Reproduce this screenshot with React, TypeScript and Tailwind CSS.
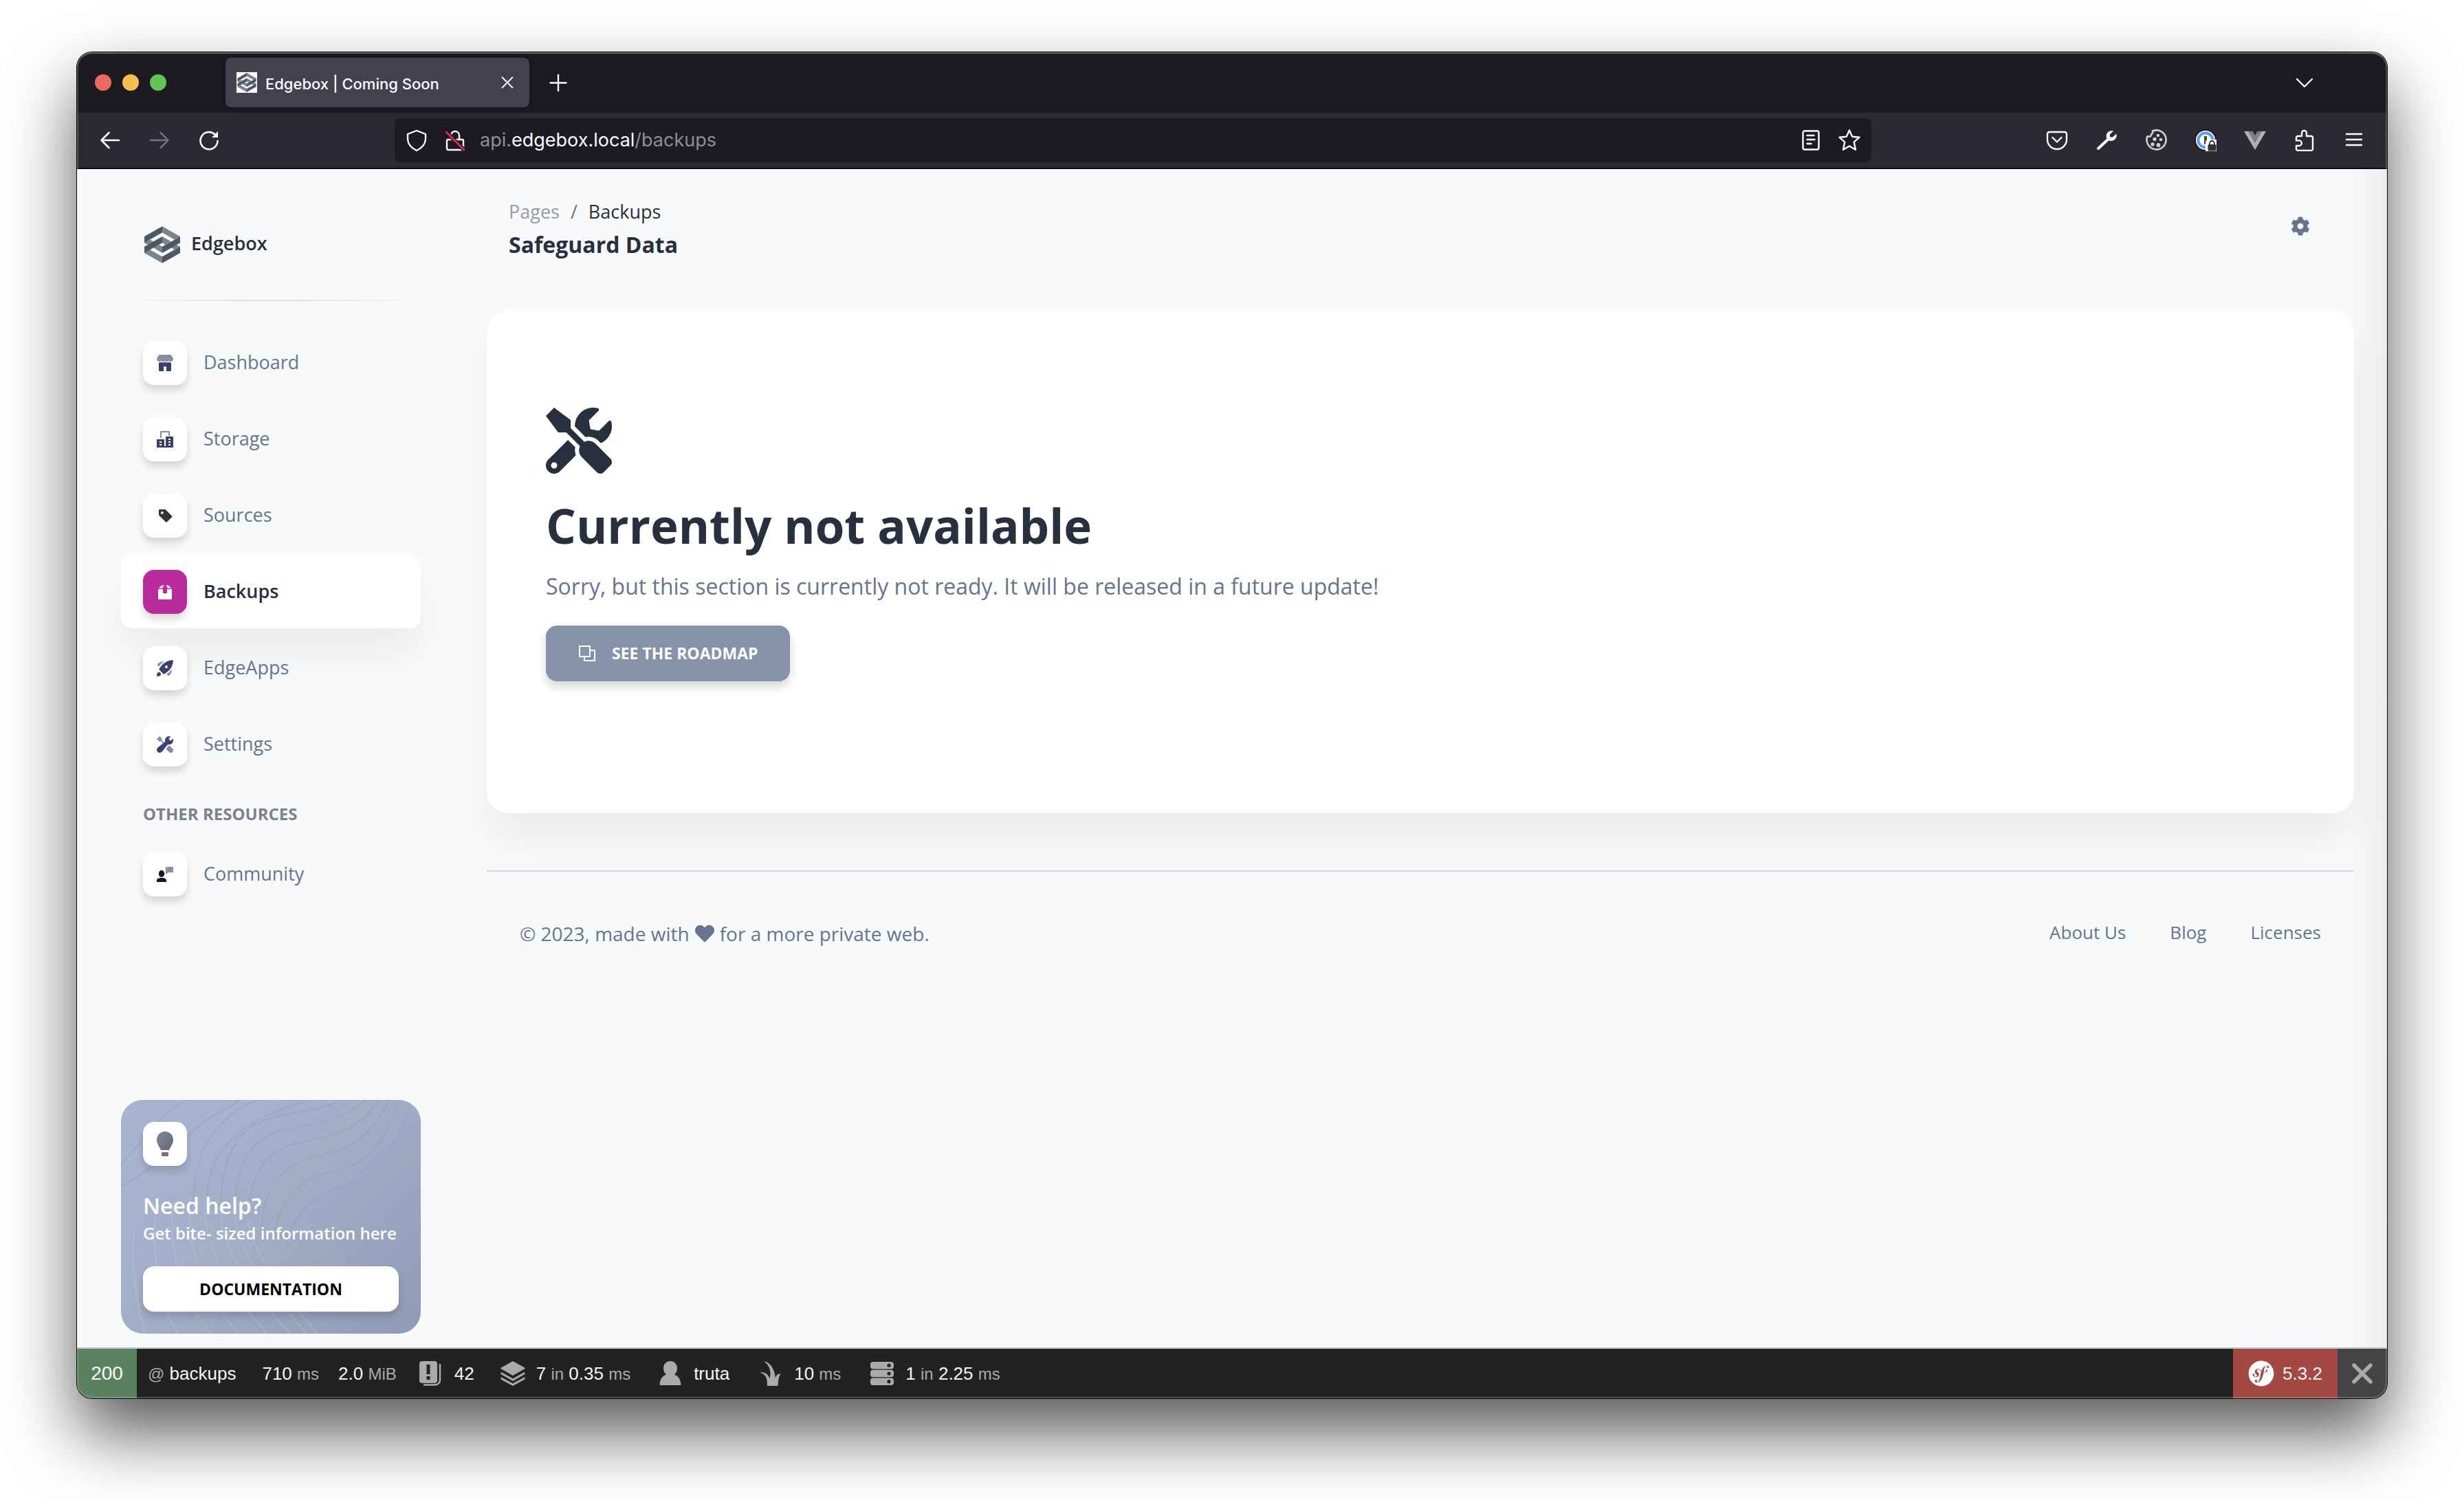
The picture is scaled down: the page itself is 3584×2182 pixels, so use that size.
import type { ReactNode } from "react";
import { FaCog, FaHeart, FaSymfony, FaTools } from "react-icons/fa";

const NAVY = "#3a416f";

/* ---------- brand ---------- */

function EdgeboxMark({ className }: { className: string }) {
  return (
    <svg viewBox="30 22 156 160" className={className} aria-hidden="true">
      <g fill="#7c838b">
        <path d="M108 22 186 66 162 80 108 49Z" />
        <path d="M30 94 54 80 70 88 46 102Z" />
        <path d="M108 66 146 88 122 102 108 94Z" />
        <path d="M70 115 94 102 108 110 108 138Z" />
        <path d="M186 110 162 124 147 115 170 102Z" />
        <path d="M30 138 54 124 108 154 108 182Z" />
      </g>
      <g fill="#4d5962">
        <path d="M30 66 108 22 108 49 30 94Z" />
        <path d="M30 110 108 66 108 94 30 138Z" />
        <path d="M108 110 186 66 186 94 108 138Z" />
        <path d="M108 154 186 110 186 138 108 182Z" />
      </g>
    </svg>
  );
}

/* ---------- browser chrome icons ---------- */

function Line({ d, className, w = 2, children }: { d?: string; className: string; w?: number; children?: ReactNode }) {
  return (
    <svg viewBox="0 0 32 32" className={className} fill="none" stroke="currentColor" strokeWidth={w} strokeLinecap="round" strokeLinejoin="round" aria-hidden="true">
      {d && <path d={d} />}
      {children}
    </svg>
  );
}

function ReloadIcon() {
  return (
    <Line className="size-8" w={2.6} d="M28.5 17A12.5 12.5 0 1 1 24.5 7.5">
      <path d="M29 3v9h-9z" fill="currentColor" stroke="none" />
    </Line>
  );
}

function InsecureLock() {
  return (
    <Line className="size-8" w={2.4}>
      <path d="M10 15V9a6 6 0 0 1 12 0v6M6 15h20a2 2 0 0 1 2 2v11a2 2 0 0 1-2 2H6a2 2 0 0 1-2-2V17a2 2 0 0 1 2-2z" />
      <path d="M3 4 29 30" stroke="#1c1b22" strokeWidth="6" />
      <path d="M3 4 29 30" stroke="#e22850" strokeWidth="2.6" />
    </Line>
  );
}

function CookieIcon() {
  return (
    <Line className="size-8 text-[#cfcfd1]" w={2.6}>
      <path d="M11 2.5c.6 3-.6 4.500-2 5 .3 2.300-2.500 4.200-5.500 2.800A14 14 0 1 0 11 2.500 14 14 0 0 1 16 1.600" />
      <g fill="currentColor" stroke="none">
        <circle cx="19" cy="9" r="2.300" />
        <circle cx="14" cy="14.500" r="2.700" />
        <circle cx="23" cy="15" r="2.300" />
        <circle cx="11" cy="22" r="2.700" />
        <circle cx="19.500" cy="23" r="2.900" />
      </g>
    </Line>
  );
}

function PasswordIcon() {
  return (
    <svg viewBox="0 0 32 32" className="size-8" aria-hidden="true">
      <circle cx="16" cy="16" r="16" fill="#1b1b1d" />
      <circle cx="16" cy="16" r="14" fill="#fff" />
      <circle cx="16" cy="16" r="10.500" fill="#fff" stroke="#5a9cf8" strokeWidth="4" />
      <rect x="14" y="10" width="4" height="12" fill="#444" />
      <path d="M16 20q0-5 5-5h11v17H16z" fill="#fff" />
      <path d="M22 23v-2.500a3.500 3.500 0 0 1 7 0V23" fill="none" stroke="#333" strokeWidth="1.800" />
      <rect x="19.500" y="22" width="12" height="9.500" rx="1.500" fill="#333" />
    </svg>
  );
}

function ToolbarIcons() {
  const items: { label: string; icon: ReactNode }[] = [
    {
      label: "Save to Pocket",
      icon: <Line className="size-8" w={2.400} d="M5 4h22a3 3 0 0 1 3 3v8a14 14 0 0 1-28 0V7a3 3 0 0 1 3-3zM9.500 12l6.500 6.500 6.500-6.500" />,
    },
    {
      label: "Web developer tools",
      icon: (
        <svg viewBox="0 0 32 32" className="size-8" aria-hidden="true">
          <path d="M4 28 20 13" stroke="#fbfbfe" strokeWidth="4" strokeLinecap="round" />
          <path d="M26 2.500 21 7.500v4h4l5.500-5c1 5-2 10.500-7.500 10.500-2 0-4-.5-5.500-2-3-3.500-2-9.500 1.500-11.500 2-1.300 4.800-1.700 7-1z" fill="#fbfbfe" />
        </svg>
      ),
    },
    { label: "Cookies", icon: <CookieIcon /> },
    { label: "Password manager", icon: <PasswordIcon /> },
    {
      label: "Vue devtools",
      icon: (
        <svg viewBox="0 0 32 32" className="size-8" aria-hidden="true">
          <path d="M0 3h6.500L16 19.500 25.500 3H32L16 30z" fill="#b0b0b2" />
          <path d="M6.500 3h6L16 9l3.500-6h6L16 19.500z" fill="#7f7f82" />
        </svg>
      ),
    },
    {
      label: "Extensions",
      icon: (
        <Line
          className="size-8"
          w={2.400}
          d="M12 10V5.500a3.500 3.500 0 0 1 7 0V10h6.500a2.500 2.500 0 0 1 2.500 2.500v16a2.500 2.500 0 0 1-2.500 2.500H6.500A2.500 2.500 0 0 1 4 28.500V24h4a3.800 3.800 0 0 0 0-7.600H4v-4A2.500 2.500 0 0 1 6.500 10z"
        />
      ),
    },
    { label: "Open application menu", icon: <Line className="size-8" w={2.400} d="M5 7h22M5 15h22M5 23h22" /> },
  ];
  return (
    <div className="flex items-center gap-10 text-[#fbfbfe]">
      {items.map((item) => (
        <button key={item.label} type="button" aria-label={item.label}>
          {item.icon}
        </button>
      ))}
    </div>
  );
}

function BrowserChrome() {
  return (
    <header className="font-[Inter,sans-serif] text-[#fbfbfe]">
      <div className="flex h-[88px] items-center bg-[#1c1b22] pr-[104px] pl-[26px]">
        <div className="flex gap-4">
          <button type="button" aria-label="Close window" className="size-6 rounded-full bg-[#ec6a5e]" />
          <button type="button" aria-label="Minimise window" className="size-6 rounded-full bg-[#f4bf4f]" />
          <button type="button" aria-label="Zoom window" className="size-6 rounded-full bg-[#61c554]" />
        </div>
        <div className="ml-[86px] flex h-[72px] w-[442px] items-center rounded-lg bg-[#42414d] px-4 shadow-[0_0_8px_rgba(0,0,0,0.5)]">
          <span className="flex size-[30px] items-center justify-center bg-white">
            <EdgeboxMark className="size-7" />
          </span>
          <span className="ml-3 flex-1 pt-1 text-[22px] font-medium">Edgebox | Coming Soon</span>
          <button type="button" aria-label="Close tab">
            <Line className="size-8" w={1.800} d="M8.500 8.500l15 15M23.500 8.500l-15 15" />
          </button>
        </div>
        <button type="button" aria-label="New tab" className="ml-[26px]">
          <Line className="size-8" w={2.400} d="M16 5v23M4.500 16.500h23" />
        </button>
        <button type="button" aria-label="List all tabs" className="ml-auto">
          <Line className="size-8" w={2.400} d="M5 11l11 11 11-11" />
        </button>
      </div>
      <div className="flex h-[82px] items-center border-b-2 border-[#0c0c0d] bg-[#2b2a33] pr-8 pl-8">
        <div className="flex gap-10">
          <button type="button" aria-label="Go back">
            <Line className="size-8" w={2.600} d="M29 16H4M14.500 5 3.500 16l11 11" />
          </button>
          <button type="button" aria-label="Go forward" disabled className="text-[#77767d]">
            <Line className="size-8" w={2.400} d="M3 16h25M17.500 5l11 11-11 11" />
          </button>
          <button type="button" aria-label="Reload page">
            <ReloadIcon />
          </button>
        </div>
        <div className="ml-[254px] flex h-16 w-[2148px] items-center rounded-lg bg-[#1c1b22] px-4">
          <button type="button" aria-label="Tracking protection">
            <Line className="size-8" w={2.400} d="M16 2 29 7v7c0 7-5 13-13 17C8 27 3 21 3 14V7z" />
          </button>
          <button type="button" aria-label="Connection is not secure" className="ml-6">
            <InsecureLock />
          </button>
          <div
            role="textbox"
            aria-label="Address"
            contentEditable
            suppressContentEditableWarning
            className="ml-5 flex-1 text-[27px] text-[#8f8e96] outline-none"
          >
            api.<span className="text-[#fbfbfe]">edgebox.local</span>/backups
          </div>
          <button type="button" aria-label="Reader view">
            <Line className="size-8" w={2.400} d="M7 2.500h18a2.500 2.500 0 0 1 2.500 2.500v22a2.500 2.500 0 0 1-2.500 2.500H7A2.500 2.500 0 0 1 4.500 27V5A2.500 2.500 0 0 1 7 2.500zM10.500 9h10M10.500 15h11M10.500 21h6" />
          </button>
          <button type="button" aria-label="Bookmark this page" className="ml-6">
            <Line className="size-8" w={2.400} d="M16 1.500l4.200 9.300 10.200 1-7.700 6.800 2.300 11.200-9-5.300-9 5.300 2.300-11.200-7.700-6.800 10.200-1z" />
          </button>
        </div>
        <div className="ml-auto">
          <ToolbarIcons />
        </div>
      </div>
    </header>
  );
}

/* ---------- sidebar icons ---------- */

function ShopIcon() {
  return (
    <svg viewBox="0 0 47 47" className="size-6" fill={NAVY} aria-hidden="true">
      <path
        opacity="0.6"
        d="M46.72 10.741 40.845.95A1.958 1.958 0 0 0 39.167 0H7.833A1.958 1.958 0 0 0 6.155.95L.28 10.741A1.958 1.958 0 0 0 0 11.750c-.008 4.316 3.484 7.822 7.800 7.833h.016a7.786 7.786 0 0 0 5.236-2.007 7.785 7.785 0 0 0 10.442 0 7.785 7.785 0 0 0 10.452 0 7.832 7.832 0 0 0 13.054-5.826c0-.355-.097-.704-.280-1.009z"
      />
      <path d="M39.198 22.491a10.680 10.680 0 0 1-5.246-1.396l-.030.016a10.640 10.640 0 0 1-10.426-.009l-.021.011a10.640 10.640 0 0 1-10.423-.011 10.640 10.640 0 0 1-7.177 1.189v22.431c0 1.228.877 2.223 1.958 2.223h11.750V33.607h7.834v13.338h11.750c1.081 0 1.958-.995 1.958-2.223V22.282c-.636.130-1.281.200-1.927.209z" />
    </svg>
  );
}

function OfficeIcon() {
  return (
    <svg viewBox="0 0 42 42" className="size-6" fill={NAVY} aria-hidden="true">
      <path opacity="0.6" d="M12.250 17.500h-3.500V1.750C8.750.782 9.532 0 10.500 0h21c.968 0 1.750.782 1.750 1.750v10.500h-3.500V3.500h-17.500z" />
      <path
        fillRule="evenodd"
        d="M40.250 14H24.500c-.968 0-1.750.782-1.750 1.750V38.500h-3.500V22.750c0-.968-.782-1.750-1.750-1.750H1.750C.782 21 0 21.782 0 22.750v17.500C0 41.218.782 42 1.750 42h38.500c.968 0 1.750-.782 1.750-1.750v-24.500c0-.968-.782-1.750-1.750-1.750zM12.250 36.750H7v-3.500h5.250zm0-7H7v-3.500h5.250zm22.750 7h-5.250v-3.500H35zm0-7h-5.250v-3.500H35zm0-7h-5.250v-3.500H35z"
      />
    </svg>
  );
}

function TagIcon() {
  return (
    <svg viewBox="0 0 24 24" className="size-6" fill="#343434" aria-hidden="true">
      <path fillRule="evenodd" d="M4.200 3h8.300l9.700 9.700c.4.400.4.900 0 1.300l-7.600 7.600c-.4.400-.9.400-1.300 0L3.500 12c-.3-.3-.5-.7-.5-1V4.200C3 3.500 3.500 3 4.200 3zM7.800 6a1.900 1.900 0 1 0 0 3.800 1.900 1.900 0 0 0 0-3.800z" />
    </svg>
  );
}

function BoxIcon() {
  return (
    <svg viewBox="0 0 24 24" className="size-6" fill="#fff" aria-hidden="true">
      <path d="M2 8h7v6h6V8h7v14.200c0 .4-.4.800-.8.800H2.800a.8.8 0 0 1-.8-.8z" />
      <path d="M3 7c2-3.500 4.300-4.800 7.700-5L8.500 6.500zM21 7c-2-3.500-3.800-4.800-7.200-5l1.700 4.500z" opacity="0.9" />
    </svg>
  );
}

function RocketIcon() {
  return (
    <svg viewBox="0 0 40 40" className="size-6" fill={NAVY} aria-hidden="true">
      <path
        fillRule="evenodd"
        d="M39.300.707a1.660 1.660 0 0 0-1.268-.490C14.652 1.437 6.015 22.263 5.932 22.473a1.666 1.666 0 0 0 .366 1.800l9.429 9.430c.474.473 1.187.616 1.808.362.208-.085 20.923-8.818 22.247-32.088a1.660 1.660 0 0 0-.482-1.270zM25.690 19.023a3.333 3.333 0 1 1 0-4.713 3.333 3.333 0 0 1 0 4.713z"
      />
      <path d="M1.855 31.407a4.740 4.740 0 0 1 6.703 6.703C6.707 39.962 0 40 0 40s0-6.743 1.855-8.593z" />
      <path opacity="0.6" d="M17.262 3.902a14.930 14.930 0 0 0-13.059 4.140 14.900 14.900 0 0 0-2.306 3c-.386.655-.280 1.488.258 2.025l3.315 3.316a43.700 43.700 0 0 1 11.792-12.481zM36.098 22.738a14.930 14.930 0 0 1-4.140 13.059 14.900 14.900 0 0 1-3 2.306c-.655.386-1.488.280-2.025-.258l-3.316-3.315a43.700 43.700 0 0 0 12.481-11.792z" />
    </svg>
  );
}

function SettingsIcon() {
  return (
    <svg viewBox="0 0 40 40" className="size-6" fill={NAVY} aria-hidden="true">
      <g opacity="0.6">
        <path d="M18.088 15.732 11.178 8.822 13.333 6.667 6.667 0 0 6.667 6.667 13.333 8.822 11.178 15.315 17.672z" />
        <path d="M31.567 23.233a13.400 13.400 0 0 1-3.087.012l-6.068 7.498 7.530 7.530a5.893 5.893 0 0 0 8.333-8.333z" />
      </g>
      <path d="M33.785 11.285l-5.070-5.070L34.062.868A9.930 9.930 0 0 0 30 0c-5.523 0-10 4.477-10 10 0 .990.148 1.943.417 2.847L2.435 27.397A7.220 7.220 0 0 0 2.110 37.890 7.160 7.160 0 0 0 7.202 40c2.065 0 4.035-.887 5.401-2.435l14.550-17.982c.904.269 1.857.417 2.847.417 5.523 0 10-4.477 10-10 0-1.448-.315-2.820-.868-4.063z" />
    </svg>
  );
}

function CommunityIcon() {
  return (
    <svg viewBox="0 0 24 24" className="size-6" aria-hidden="true">
      <path d="M13 1h11v8h-7l-4 3z" fill="#8b8dab" />
      <ellipse cx="7" cy="11" rx="4.200" ry="5" fill="#141727" />
      <path d="M0 23v-2.500C0 18 3 17 7 17s7 1 7 3.500V23z" fill="#141727" />
    </svg>
  );
}

function NavItem({ label, icon, active }: { label: string; icon: ReactNode; active?: boolean }) {
  return (
    <li>
      <a
        href="#"
        aria-current={active ? "page" : undefined}
        className={
          active
            ? "flex h-[107px] items-center gap-6 rounded-2xl bg-white px-8 text-[27px] font-semibold text-[#282f3f] shadow-[0_40px_54px_rgba(0,0,0,0.05)]"
            : "relative flex h-[107px] items-center gap-6 px-8 text-[27px] text-[#67748e]"
        }
      >
        <span
          className={
            active
              ? "flex size-16 items-center justify-center rounded-2xl bg-[#b92a9b] shadow-[0_8px_12px_rgba(0,0,0,0.14)]"
              : "flex size-16 items-center justify-center rounded-2xl bg-white shadow-[0_8px_12px_rgba(0,0,0,0.14)]"
          }
        >
          {icon}
        </span>
        {label}
      </a>
    </li>
  );
}

function HelpCard() {
  return (
    <section className="relative overflow-hidden rounded-[32px] bg-linear-135 from-[#acb8d3] via-[#a2adc6] to-[#8f9bb4] p-8 text-white">
      <svg viewBox="0 0 436 340" preserveAspectRatio="none" className="absolute inset-0 size-full" fill="none" aria-hidden="true">
        <path d="M0 0H170C140 25 110 35 90 60S40 100 0 127Z" fill="#a9b2d2" opacity="0.6" />
        <g stroke="#8f9bb8" strokeWidth="2" opacity="0.38">
          <path d="M0 127C60 90 80 70 105 45S150 18 172 0" strokeWidth="3" />
          <path d="M0 95C40 50 45 30 95 0" />
          <path d="M105 150C105 100 120 30 200 0" />
          <path d="M125 150C125 90 150 35 275 0" />
          <path d="M145 160C145 100 160 40 220 26S290 15 320 0" />
          <path d="M165 165C165 110 180 55 240 43S330 25 355 0" />
          <path d="M185 175C185 120 205 72 260 62S350 40 375 0" />
          <path d="M205 185C205 140 230 92 285 82S365 50 390 0" />
          <path d="M225 195C225 160 255 112 305 105S385 60 405 0" />
          <path d="M240 210C245 175 280 138 325 125S400 70 420 10" />
        </g>
        <g stroke="#c1cade" strokeWidth="2" opacity="0.32">
          <path d="M20 190C12 240 25 300 34 340" />
          <path d="M50 170C45 230 55 290 82 340" />
          <path d="M75 150C70 220 85 285 130 340" />
          <path d="M100 140C95 210 115 280 172 340" />
          <path d="M122 150C120 200 145 270 213 340" />
          <path d="M145 150C142 200 170 260 246 340" />
          <path d="M165 160C165 200 190 250 270 340" />
          <path d="M185 170C185 200 205 245 285 340" />
        </g>
      </svg>
      <div className="relative">
        <span className="flex size-16 items-center justify-center rounded-2xl bg-white shadow-[0_8px_12px_rgba(0,0,0,0.14)]">
          <svg viewBox="0 0 24 36" className="h-9 w-6" aria-hidden="true">
            <defs>
              <linearGradient id="bulb" x1="0" y1="0" x2="1" y2="1">
                <stop offset="0" stopColor="#7f85a0" />
                <stop offset="1" stopColor="#6b6878" />
              </linearGradient>
            </defs>
            <path d="M12 0c7 0 12 5 12 12 0 6-4 10-6 15H6C4 22 0 18 0 12 0 5 5 0 12 0z" fill="url(#bulb)" />
            <rect x="7" y="30" width="10" height="6" rx="1.500" fill="#6f7288" />
          </svg>
        </span>
        <h6 className="mt-9 text-[32px] leading-[44px] font-semibold">Need help?</h6>
        <p className="text-[24px] leading-9 font-semibold whitespace-nowrap">Get bite- sized information here</p>
        <button
          type="button"
          className="mt-[30px] h-[66px] w-full rounded-2xl bg-white text-[23px] font-bold text-black shadow-[0_8px_12px_rgba(0,0,0,0.14)]"
        >
          DOCUMENTATION
        </button>
      </div>
    </section>
  );
}

function Sidebar() {
  return (
    <aside className="flex w-[532px] shrink-0 flex-col overflow-hidden pr-8 pb-5 pl-16">
      <a href="#" className="mt-20 flex items-center gap-4 px-[34px] text-[27px] leading-[56px] font-semibold text-[#282f3f]">
        <EdgeboxMark className="h-[54px] w-[52px]" />
        <span className="pb-1">Edgebox</span>
      </a>
      <hr className="-mx-4 mt-[50px] h-[2px] border-0 bg-linear-to-r from-transparent via-[#dcdddf] to-transparent" />
      <nav aria-label="Main" className="mt-9">
        <ul className="flex flex-col gap-1">
          <NavItem label="Dashboard" icon={<ShopIcon />} />
          <NavItem label="Storage" icon={<OfficeIcon />} />
          <NavItem label="Sources" icon={<TagIcon />} />
          <NavItem label="Backups" icon={<BoxIcon />} active />
          <NavItem label="EdgeApps" icon={<RocketIcon />} />
          <NavItem label="Settings" icon={<SettingsIcon />} />
        </ul>
        <h6 className="mt-8 px-8 text-[24px] leading-8 font-bold text-[#7c818c]">OTHER RESOURCES</h6>
        <ul className="mt-[18px]">
          <NavItem label="Community" icon={<CommunityIcon />} />
        </ul>
      </nav>
      <div className="mt-auto">
        <HelpCard />
      </div>
    </aside>
  );
}

/* ---------- page ---------- */

function Content() {
  return (
    <main className="mr-12 ml-16 flex-1 text-[28px] text-[#67748e]">
      <div className="flex items-start justify-between pr-16 pl-8">
        <div className="mt-10">
          <nav aria-label="Breadcrumb">
            <ol className="flex gap-4 text-[27px] leading-[44px]">
              <li>
                <a href="#" className="text-[#959ba6]">
                  Pages
                </a>
              </li>
              <li aria-hidden="true">/</li>
              <li aria-current="page" className="text-[#282f3f]">
                Backups
              </li>
            </ol>
          </nav>
          <h1 className="text-[32px] leading-[52px] font-bold text-[#282f3f]">Safeguard Data</h1>
        </div>
        <button type="button" aria-label="Settings" className="mt-[69px]">
          <FaCog className="size-7" />
        </button>
      </div>

      <section className="mt-[70px] flex flex-col items-start rounded-[32px] bg-white px-[86px] pt-[141px] pb-48 shadow-[0_40px_54px_rgba(0,0,0,0.05)]">
        <FaTools className="size-24 text-[#282f3f]" />
        <h2 className="mt-7 text-[69px] leading-[94px] font-bold text-[#282f3f]">Currently not available</h2>
        <p className="mt-[18px] text-[32px] leading-[48px]">
          Sorry, but this section is currently not ready. It will be released in a future update!
        </p>
        <a
          href="#"
          className="mt-[33px] flex h-[81px] items-center gap-6 rounded-2xl bg-[#8692aa] pr-[46px] pl-12 text-[23px] font-bold text-white shadow-[0_8px_14px_rgba(0,0,0,0.16)]"
        >
          <svg viewBox="0 0 24 24" className="size-6" fill="none" stroke="currentColor" strokeWidth="2" aria-hidden="true">
            <path d="M1 1h15v15H1zM16 7h7v15H8v-6" />
          </svg>
          SEE THE ROADMAP
        </a>
      </section>

      <footer className="mt-[83px] flex items-start justify-between border-t-2 border-[#d5d7df] px-12 pt-[66px] leading-[48px]">
        <p className="flex items-center gap-2">
          © 2023, made with
          <FaHeart className="size-7" aria-label="love" />
          for a more private web.
        </p>
        <ul className="flex gap-16 text-[26px] leading-[44px]">
          <li>
            <a href="#">About Us</a>
          </li>
          <li>
            <a href="#">Blog</a>
          </li>
          <li>
            <a href="#">Licenses</a>
          </li>
        </ul>
      </footer>
    </main>
  );
}

/* ---------- profiler bar ---------- */

function Dim({ children }: { children: ReactNode }) {
  return <span className="text-[24px] text-[#aaa]">{children}</span>;
}

function ProfilerBar() {
  return (
    <div className="flex h-[74px] items-stretch border-t-2 border-[#c4c5c6] bg-[#222] font-['Liberation_Sans',Arial,sans-serif] text-[26px] whitespace-pre text-[#f5f5f5]">
      <a href="#" className="flex w-[87px] items-center justify-center bg-[#5a8160] text-[28px] text-white">
        200
      </a>
      <a href="#" className="ml-4 flex items-center">
        <span>
          <Dim>@</Dim> backups
        </span>
      </a>
      <a href="#" className="ml-[38px] flex items-center">
        <span>
          710 <Dim>ms</Dim>
        </span>
      </a>
      <a href="#" className="ml-7 flex items-center">
        <span>
          2.0 <Dim>MiB</Dim>
        </span>
      </a>
      <a href="#" className="ml-8 flex items-center gap-4">
        <svg viewBox="0 0 36 36" className="size-9" aria-hidden="true">
          <path d="M8 34.500h16a7 7 0 0 0 7-7V5" fill="none" stroke="#aaa" strokeWidth="2.500" strokeLinecap="round" />
          <rect x="1" y="0" width="26" height="32" rx="4" fill="#aaa" />
          <path d="M11.500 5h5v14h-5zM11.500 22h5v5h-5z" fill="#222" />
        </svg>
        42
      </a>
      <a href="#" className="ml-[38px] flex items-center gap-4">
        <svg viewBox="0 0 36 36" className="size-9" fill="#aaa" aria-hidden="true">
          <path d="M18 0l17 9.500a1 1 0 0 1 0 1.700L18 21 1 11.200a1 1 0 0 1 0-1.700z" />
          <path d="M1.500 16 18 25.500 34.500 16c1.500 1 1.500 2.500 0 3.500L18 29 1.500 19.500c-1.500-1-1.500-2.500 0-3.500zM1.500 23.500 18 32.500l16.500-9c1.500 1 1.500 2.500 0 3.500L18 36 1.500 27c-1.500-1-1.500-2.500 0-3.500z" />
        </svg>
        <span>
          7 <Dim>in</Dim> 0.35 <Dim>ms</Dim>
        </span>
      </a>
      <a href="#" className="ml-10 flex items-center gap-4">
        <svg viewBox="0 0 36 36" className="size-9" fill="#aaa" aria-hidden="true">
          <path d="M18 0c6 0 10 4.500 10 10.500 0 3.500-1.500 7-4 9 6 2.500 9 7 9.500 15.500h-31c.5-8.500 3.500-13 9.500-15.500-2.500-2-4-5.500-4-9C8 4.500 12 0 18 0z" />
        </svg>
        truta
      </a>
      <a href="#" className="ml-[42px] flex items-center gap-4">
        <svg viewBox="0 0 36 36" className="size-9" fill="#aaa" aria-hidden="true">
          <path d="M8 0c10 2 16 12 17 25 .5-4 3-7 8-6.500-3 2.500-4 8-4.500 17.500H13C13 26 12 19 2 16.500c7-1 12 2 14.500 9C19 16 17 6 8 0z" />
        </svg>
        <span>
          10 <Dim>ms</Dim>
        </span>
      </a>
      <a href="#" className="ml-[42px] flex items-center gap-4">
        <svg viewBox="0 0 36 36" className="size-9" fill="#aaa" aria-hidden="true">
          <rect x="1" y="1" width="34" height="10.500" rx="4" />
          <rect x="1" y="12.800" width="34" height="10.500" rx="4" />
          <rect x="1" y="24.500" width="34" height="10.500" rx="4" />
          <g fill="#222">
            <circle cx="28" cy="6.200" r="2.600" />
            <circle cx="28" cy="18" r="2.600" />
            <circle cx="28" cy="29.700" r="2.600" />
          </g>
        </svg>
        <span>
          1 <Dim>in</Dim> 2.25 <Dim>ms</Dim>
        </span>
      </a>
      <a href="#" className="ml-auto flex w-[152px] items-center justify-center gap-3 bg-[#a34843]">
        <FaSymfony className="size-[38px] text-white" aria-label="Symfony" />
        5.3.2
      </a>
      <button type="button" aria-label="Close toolbar" className="flex w-[72px] items-center justify-center bg-[#444]">
        <svg viewBox="0 0 32 32" className="size-8" aria-hidden="true">
          <path d="M4 4l24 24M28 4 4 28" stroke="#aaa" strokeWidth="5.500" strokeLinecap="round" />
        </svg>
      </button>
    </div>
  );
}

export default function App() {
  return (
    <div className="flex min-h-screen bg-white px-28 pt-[76px] pb-[148px]">
      <div className="relative flex flex-1 flex-col overflow-clip rounded-[22px] shadow-[0_0_0_1px_#000,0_50px_100px_rgba(0,0,0,0.66)]">
        <BrowserChrome />
        <div className="relative flex flex-1 bg-[#f8f9fb] font-['Open_Sans','Noto_Sans',sans-serif]">
          <Sidebar />
          <Content />
          <div className="pointer-events-none absolute inset-y-0 right-0 w-14 bg-linear-to-r from-transparent to-black/5" />
        </div>
        <ProfilerBar />
        <div className="pointer-events-none absolute inset-0 rounded-[22px] border-2 border-white/20 border-t-white/35" />
      </div>
    </div>
  );
}
